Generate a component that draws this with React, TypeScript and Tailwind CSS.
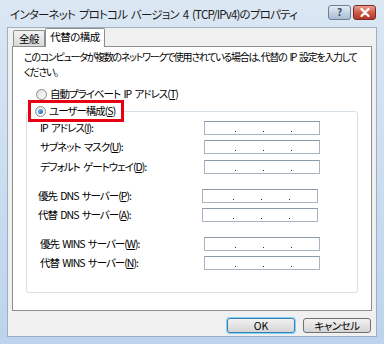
import React from 'react';

const font = "[font-family:'Noto_Sans_CJK_JP','Noto_Sans',sans-serif] [font-feature-settings:'palt'] [word-spacing:2px]";

const IpBox = () => (
    <div className="w-[116px] h-[14px] border border-[#a9b4c2] border-t-[#8d99a8] bg-white flex items-end pb-[2px]">
        <span className="w-[30px]"/>
        <span className="w-[1px] h-[1px] bg-[#333]"/>
        <span className="w-[27px]"/>
        <span className="w-[1px] h-[1px] bg-[#333]"/>
        <span className="w-[27px]"/>
        <span className="w-[1px] h-[1px] bg-[#333]"/>
    </div>
);

const Row = ({label, mt}: {label: React.ReactNode; mt?: string}) => (
    <div className={`flex items-center h-[14px] ${mt || ''}`}>
        <div className="w-[164px] text-[10.5px] tracking-[-1px] leading-[14px] text-black whitespace-nowrap">{label}</div>
        <IpBox/>
    </div>
);

const U = ({c}: {c: string}) => <span className="underline">{c}</span>;

const Radio = ({checked}: {checked?: boolean}) => (
    <span className="w-[11px] h-[11px] rounded-full border border-[#8a8a8a] bg-gradient-to-br from-[#e0e0e0] to-white flex items-center justify-center shrink-0">
        {checked && <span className="w-[5px] h-[5px] rounded-full bg-gradient-to-br from-[#7cc7ff] to-[#1b5fb0]"/>}
    </span>
);

export default function App() {
    return (
        <div className={`w-[384px] h-[344px] flex flex-col bg-gradient-to-b from-[#dbe7f3] to-[#bcd4ec] ${font} text-black`}>
            {/* title bar */}
            <div className="h-[27px] flex items-center pl-[10px] pr-[8px]">
                <div className="flex-1 text-[11.5px] tracking-[-0.8px] text-[#1a1a1a] whitespace-nowrap pt-[2px]">
                    インターネット プロトコル バージョン 4 (TCP/IPv4)のプロパティ
                </div>
                <div className="flex gap-[2px] mb-[3px]">
                    <div className="w-[23px] h-[15px] rounded-[3px] border border-[#6d7f94] bg-gradient-to-b from-[#e4ecf5] via-[#c5d4e4] to-[#aabdd2] flex items-center justify-center text-[10px] font-bold text-[#3b4a5c] leading-none">?</div>
                    <div className="w-[23px] h-[15px] rounded-[3px] border border-[#7a2a22] bg-gradient-to-b from-[#e8a093] via-[#cf5a46] to-[#b3382a] flex items-center justify-center">
                        <svg width="10" height="9" viewBox="0 0 10 9">
                            <path d="M1.5 1 L8.5 8 M8.5 1 L1.5 8" stroke="white" strokeWidth="2.2" strokeLinecap="round"/>
                        </svg>
                    </div>
                </div>
            </div>
            {/* client */}
            <div className="mx-[7px] h-[310px] bg-[#f0f0f0] border border-[#9bb0c6] px-[4px] flex flex-col">
                {/* tabs */}
                <div className="h-[18px] flex items-end pl-[1px]">
                    <div className="h-[16px] w-[32px] border border-[#8e8f8f] border-b-0 rounded-t-[2px] bg-gradient-to-b from-[#f2f2f2] to-[#d8d8d8] text-[10.5px] tracking-[-0.5px] leading-[15px] text-center">全般</div>
                    <div className="h-[19px] -mb-[1px] w-[60px] border border-[#8e8f8f] border-b-0 rounded-t-[2px] bg-white text-[10.5px] tracking-[-0.5px] leading-[16px] text-center relative">代替の構成</div>
                </div>
                {/* panel */}
                <div className="h-[265px] bg-white border border-[#8e8f8f] flex flex-col pt-[3px]">
                    <div className="pl-[11px] text-[10px] leading-[14.5px] tracking-[-1.3px] whitespace-nowrap">
                        <div>このコンピュータが複数のネットワークで使用されている場合は、代替の IP 設定を入力して</div>
                        <div>ください。</div>
                    </div>
                    <div className="flex items-center gap-[3px] pl-[23px] mt-[9px] h-[12px] text-[10.5px] tracking-[-1px] leading-[12px]">
                        <Radio/>
                        <span>自動プライベート IP アドレス(<U c="T"/>)</span>
                    </div>
                    <fieldset className="mx-[13px] mt-[0px] border border-[#d5dfe5] rounded-[3px] px-0 pb-[22px] pt-0">
                        <legend className="ml-[1px] border-[3px] border-[#e60012] px-[4px] h-[22px] flex items-center gap-[3px] text-[10.5px] tracking-[-1px] leading-[12px]">
                            <Radio checked/>
                            <span className="pr-[2px]">ユーザー構成(<U c="S"/>)</span>
                        </legend>
                        <div className="pl-[13px] -mt-[1px] flex flex-col">
                            <Row label={<>IP アドレス(<U c="I"/>):</>}/>
                            <Row mt="mt-[5px]" label={<>サブネット マスク(<U c="U"/>):</>}/>
                            <Row mt="mt-[6px]" label={<>デフォルト ゲートウェイ(<U c="D"/>):</>}/>
                            <div className="-ml-[2px] flex flex-col">
                                <Row mt="mt-[15px]" label={<>優先 DNS サーバー(<U c="P"/>):</>}/>
                                <Row mt="mt-[5px]" label={<>代替 DNS サーバー(<U c="A"/>):</>}/>
                            </div>
                            <Row mt="mt-[15px]" label={<>優先 WINS サーバー(<U c="W"/>):</>}/>
                            <Row mt="mt-[5px]" label={<>代替 WINS サーバー(<U c="N"/>):</>}/>
                        </div>
                    </fieldset>
                </div>
                {/* buttons */}
                <div className="flex justify-end gap-[8px] mt-[7px] pr-[1px]">
                    <div className="w-[68px] h-[15px] rounded-[3px] border border-[#3c7fb1] shadow-[0_0_0_1px_#7fd3f5] bg-gradient-to-b from-[#f2f2f2] to-[#d5d5d5] text-[10.5px] leading-[13px] text-center">OK</div>
                    <div className="w-[68px] h-[15px] rounded-[3px] border border-[#707070] bg-gradient-to-b from-[#f2f2f2] to-[#d5d5d5] text-[10.5px] tracking-[-0.5px] leading-[13px] text-center">キャンセル</div>
                </div>
            </div>
        </div>
    );
}
